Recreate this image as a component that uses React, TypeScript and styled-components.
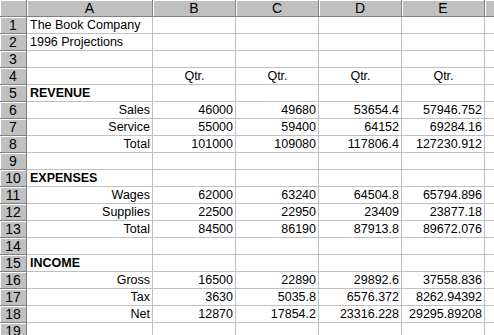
import React from 'react'
import styled, { createGlobalStyle } from 'styled-components'

const GlobalStyle = createGlobalStyle`
  html, body {
    margin: 0;
    padding: 0;
    background: #ffffff;
  }
  body {
    font-family: 'Liberation Sans', Arial, sans-serif;
    overflow: hidden;
  }
`

const COLUMNS = ['A', 'B', 'C', 'D', 'E', 'F']

type Cell = { text: string; align?: 'left' | 'right' | 'center'; bold?: boolean }

const L = (text: string, bold = false): Cell => ({ text, align: 'left', bold })
const R = (text: string): Cell => ({ text, align: 'right' })
const C = (text: string): Cell => ({ text, align: 'center' })

const ROWS: Cell[][] = [
  [L('The Book Company')],
  [L('1996 Projections')],
  [],
  [L(''), C('Qtr.'), C('Qtr.'), C('Qtr.'), C('Qtr.')],
  [L('REVENUE', true)],
  [R('Sales'), R('46000'), R('49680'), R('53654.4'), R('57946.752')],
  [R('Service'), R('55000'), R('59400'), R('64152'), R('69284.16')],
  [R('Total'), R('101000'), R('109080'), R('117806.4'), R('127230.912')],
  [],
  [L('EXPENSES', true)],
  [R('Wages'), R('62000'), R('63240'), R('64504.8'), R('65794.896')],
  [R('Supplies'), R('22500'), R('22950'), R('23409'), R('23877.18')],
  [R('Total'), R('84500'), R('86190'), R('87913.8'), R('89672.076')],
  [],
  [L('INCOME', true)],
  [R('Gross'), R('16500'), R('22890'), R('29892.6'), R('37558.836')],
  [R('Tax'), R('3630'), R('5035.8'), R('6576.372'), R('8262.94392')],
  [R('Net'), R('12870'), R('17854.2'), R('23316.228'), R('29295.89208')],
  [],
]

const Viewport = styled.div`
  width: 494px;
  height: 335px;
  overflow: hidden;
`

const Sheet = styled.div`
  display: grid;
  grid-template-columns: 27px 126px 83px 83px 83px 83px 83px;
  grid-auto-rows: 17px;
  width: max-content;
  font-size: 12.5px;
  color: #000;
`

const HeaderCell = styled.div`
  background: #c0c0c0;
  border-right: 1px solid #808080;
  border-bottom: 1px solid #808080;
  box-shadow: inset 1px 1px 0 #ffffff;
  display: flex;
  align-items: center;
  justify-content: center;
  line-height: 1;
  color: #000;
  font-size: 14px;
`

const DataCell = styled.div<{ $align: string; $bold: boolean }>`
  border-right: 1px solid #c0c0c0;
  border-bottom: 1px solid #c0c0c0;
  padding: 0 2px 0 3px;
  display: flex;
  align-items: center;
  justify-content: ${({ $align }) =>
    $align === 'right' ? 'flex-end' : $align === 'center' ? 'center' : 'flex-start'};
  font-weight: ${({ $bold }) => ($bold ? 700 : 400)};
  white-space: nowrap;
  line-height: 1;
`

export default function App() {
  return (
    <>
      <GlobalStyle />
      <Viewport>
        <Sheet>
          <HeaderCell />
          {COLUMNS.map((c) => (
            <HeaderCell key={c}>{c}</HeaderCell>
          ))}
          {ROWS.map((row, r) => (
            <React.Fragment key={r}>
              <HeaderCell>{r + 1}</HeaderCell>
              {COLUMNS.map((c, i) => {
                const cell = row[i]
                return (
                  <DataCell key={c} $align={cell?.align ?? 'left'} $bold={!!cell?.bold}>
                    {cell?.text}
                  </DataCell>
                )
              })}
            </React.Fragment>
          ))}
        </Sheet>
      </Viewport>
    </>
  )
}
